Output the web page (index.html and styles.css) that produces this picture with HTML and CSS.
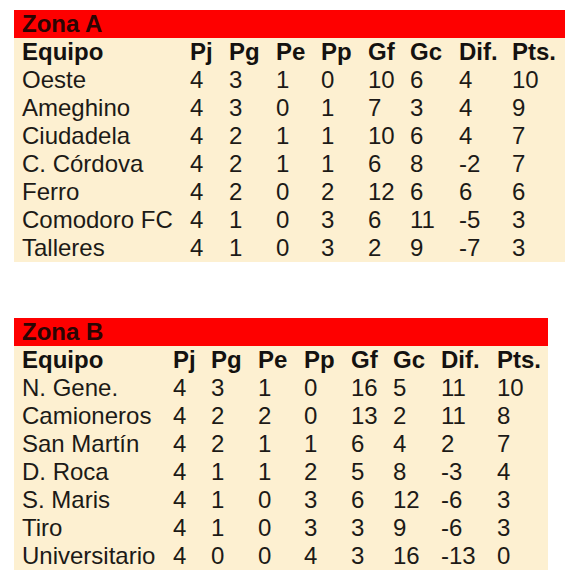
FILE: index.html
```html
<!DOCTYPE html>
<html lang="es">
<head>
<meta charset="utf-8">
<title>Zonas</title>
<link rel="stylesheet" href="styles.css">
</head>
<body>
<section class="zona zona-a">
  <h2 class="zona-title">Zona A</h2>
  <table class="tabla">
    <colgroup>
      <col class="c0"><col class="c1"><col class="c2"><col class="c3"><col class="c4"><col class="c5"><col class="c6"><col class="c7"><col class="c8">
    </colgroup>
    <thead>
      <tr><th>Equipo</th><th>Pj</th><th>Pg</th><th>Pe</th><th>Pp</th><th>Gf</th><th>Gc</th><th>Dif.</th><th>Pts.</th></tr>
    </thead>
    <tbody>
      <tr><td>Oeste</td><td>4</td><td>3</td><td>1</td><td>0</td><td>10</td><td>6</td><td>4</td><td>10</td></tr>
      <tr><td>Ameghino</td><td>4</td><td>3</td><td>0</td><td>1</td><td>7</td><td>3</td><td>4</td><td>9</td></tr>
      <tr><td>Ciudadela</td><td>4</td><td>2</td><td>1</td><td>1</td><td>10</td><td>6</td><td>4</td><td>7</td></tr>
      <tr><td>C. Córdova</td><td>4</td><td>2</td><td>1</td><td>1</td><td>6</td><td>8</td><td>-2</td><td>7</td></tr>
      <tr><td>Ferro</td><td>4</td><td>2</td><td>0</td><td>2</td><td>12</td><td>6</td><td>6</td><td>6</td></tr>
      <tr><td>Comodoro FC</td><td>4</td><td>1</td><td>0</td><td>3</td><td>6</td><td>11</td><td>-5</td><td>3</td></tr>
      <tr><td>Talleres</td><td>4</td><td>1</td><td>0</td><td>3</td><td>2</td><td>9</td><td>-7</td><td>3</td></tr>
    </tbody>
  </table>
</section>
<section class="zona zona-b">
  <h2 class="zona-title">Zona B</h2>
  <table class="tabla">
    <colgroup>
      <col class="c0"><col class="c1"><col class="c2"><col class="c3"><col class="c4"><col class="c5"><col class="c6"><col class="c7"><col class="c8">
    </colgroup>
    <thead>
      <tr><th>Equipo</th><th>Pj</th><th>Pg</th><th>Pe</th><th>Pp</th><th>Gf</th><th>Gc</th><th>Dif.</th><th>Pts.</th></tr>
    </thead>
    <tbody>
      <tr><td>N. Gene.</td><td>4</td><td>3</td><td>1</td><td>0</td><td>16</td><td>5</td><td>11</td><td>10</td></tr>
      <tr><td>Camioneros</td><td>4</td><td>2</td><td>2</td><td>0</td><td>13</td><td>2</td><td>11</td><td>8</td></tr>
      <tr><td>San Martín</td><td>4</td><td>2</td><td>1</td><td>1</td><td>6</td><td>4</td><td>2</td><td>7</td></tr>
      <tr><td>D. Roca</td><td>4</td><td>1</td><td>1</td><td>2</td><td>5</td><td>8</td><td>-3</td><td>4</td></tr>
      <tr><td>S. Maris</td><td>4</td><td>1</td><td>0</td><td>3</td><td>6</td><td>12</td><td>-6</td><td>3</td></tr>
      <tr><td>Tiro</td><td>4</td><td>1</td><td>0</td><td>3</td><td>3</td><td>9</td><td>-6</td><td>3</td></tr>
      <tr><td>Universitario</td><td>4</td><td>0</td><td>0</td><td>4</td><td>3</td><td>16</td><td>-13</td><td>0</td></tr>
    </tbody>
  </table>
</section>
</body>
</html>
```
FILE: styles.css
```css
html, body {
  margin: 0;
  padding: 0;
  background: #ffffff;
}
body {
  font-family: "Liberation Sans", Arial, sans-serif;
  color: #1c1a17;
  padding: 10px 0 0 14px;
}
.zona {
  display: flex;
  flex-direction: column;
}
.zona-a { width: 551px; }
.zona-b { width: 534px; margin-top: 56px; }
.zona-title {
  margin: 0;
  height: 28px;
  background: #fe0000;
  color: #2a0503;
  font-size: 24px;
  line-height: 28px;
  font-weight: bold;
  padding-left: 8px;
}
.tabla {
  width: 100%;
  border-collapse: collapse;
  table-layout: fixed;
  background: #fdf0d1;
}
.tabla th, .tabla td {
  padding: 0;
  height: 28px;
  line-height: 28px;
  font-size: 24px;
  text-align: left;
  white-space: nowrap;
  overflow: visible;
}
.tabla th { font-weight: bold; color: #141210; }
.tabla th:first-child, .tabla td:first-child { padding-left: 8px; }

.zona-a .c0 { width: 176px; }
.zona-a .c1 { width: 39px; }
.zona-a .c2 { width: 47px; }
.zona-a .c3 { width: 45px; }
.zona-a .c4 { width: 47px; }
.zona-a .c5 { width: 42px; }
.zona-a .c6 { width: 49px; }
.zona-a .c7 { width: 53px; }
.zona-a .c8 { width: 53px; }

.zona-b .c0 { width: 159px; }
.zona-b .c1 { width: 38px; }
.zona-b .c2 { width: 47px; }
.zona-b .c3 { width: 46px; }
.zona-b .c4 { width: 47px; }
.zona-b .c5 { width: 42px; }
.zona-b .c6 { width: 48px; }
.zona-b .c7 { width: 56px; }
.zona-b .c8 { width: 51px; }
```
